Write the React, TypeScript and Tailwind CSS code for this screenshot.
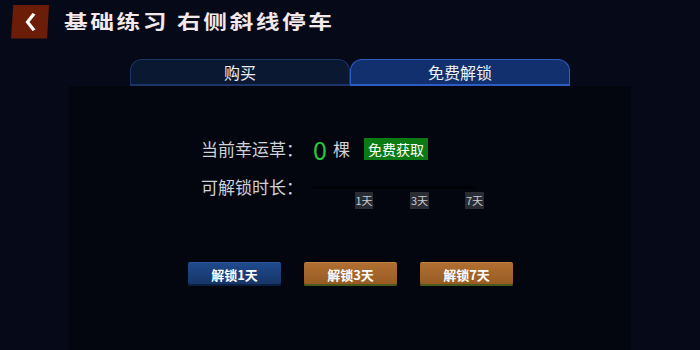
import React from "react";

const font = { fontFamily: '"Noto Sans CJK SC", "Noto Sans", sans-serif' };

function UnlockButton({ label, tone }: { label: string; tone: "blue" | "orange" }) {
  const cls =
    tone === "blue"
      ? "bg-gradient-to-b from-[#1f4a8c] to-[#163466] border-[#2a5499] shadow-[inset_0_-2px_0_#0c1f40]"
      : "bg-gradient-to-b from-[#b06f32] to-[#955a22] border-[#c08040] shadow-[inset_0_-2px_0_#4a5a1c]";
  return (
    <div
      className={`w-[93px] h-[24px] flex items-center justify-center rounded-[2px] border-t text-white text-[13px] font-bold ${cls}`}
    >
      {label}
    </div>
  );
}

export default function App() {
  return (
    <div style={font} className="w-[700px] h-[350px] bg-[#060a18] overflow-hidden flex flex-col">
      {/* header */}
      <div className="h-[42px] flex items-center">
        <div className="ml-[11px] mt-[1px] w-[38px] h-[34px] bg-[#6b1d08] flex items-center justify-center [clip-path:polygon(6%_0,100%_0,95%_100%,0_100%)]">
          <svg width="14" height="20" viewBox="0 0 14 20">
            <path d="M9.5 1 L2.5 10 L9.5 19 L12.5 17.5 L6.5 10 L12.5 2.5 Z" fill="#ffffff" />
          </svg>
        </div>
        <div className="ml-[15px] text-[19px] font-bold text-[#f3e8ea] tracking-[2px] whitespace-nowrap inline-block origin-left scale-x-[1.25]">
          基础练习 右侧斜线停车
        </div>
      </div>

      {/* tabs */}
      <div className="mt-[17px] flex justify-center">
        <div className="w-[220px] h-[27px] rounded-t-[12px] border border-b-2 border-[#1b3566] bg-[#0b1831] flex items-center justify-center text-[16px] text-[#e8ecf2]">
          购买
        </div>
        <div className="w-[220px] h-[27px] rounded-t-[12px] border border-b-2 border-[#2c5cc4] bg-[#11306d] flex items-center justify-center text-[16px] text-[#eef1f6]">
          免费解锁
        </div>
      </div>

      {/* panel */}
      <div className="mx-auto w-[562px] flex-1 bg-[#03050f] flex flex-col">
        <div className="mt-[52px] ml-[132px] flex items-center h-[22px]">
          <span className="text-[17px] text-[#cfd1d6]">当前幸运草：</span>
          <span className="ml-[10px] text-[25px] leading-none text-[#27c93a]">0</span>
          <span className="ml-[6px] text-[17px] text-[#cfd1d6]">棵</span>
          <span className="ml-[14px] h-[22px] px-[4px] bg-[#0c7a12] text-white text-[14px] flex items-center">
            免费获取
          </span>
        </div>

        <div className="mt-[16px] ml-[132px] flex items-start">
          <span className="text-[17px] text-[#cfd1d6] leading-[22px]">可解锁时长：</span>
          <div className="ml-[9px] flex flex-col">
            <div className="mt-[10px] w-[163px] h-[3px] bg-[#010207]" />
            <div className="mt-[3px] flex text-[11px] text-[#c8cad0]">
              <span className="ml-[43px] w-[18px] h-[17px] bg-[#2a2c33] flex items-center justify-center">1天</span>
              <span className="ml-[37px] w-[19px] h-[17px] bg-[#2a2c33] flex items-center justify-center">3天</span>
              <span className="ml-[36px] w-[19px] h-[17px] bg-[#2a2c33] flex items-center justify-center">7天</span>
            </div>
          </div>
        </div>

        <div className="mt-[53px] ml-[119px] flex gap-[23px]">
          <UnlockButton label="解锁1天" tone="blue" />
          <UnlockButton label="解锁3天" tone="orange" />
          <UnlockButton label="解锁7天" tone="orange" />
        </div>
      </div>
    </div>
  );
}
